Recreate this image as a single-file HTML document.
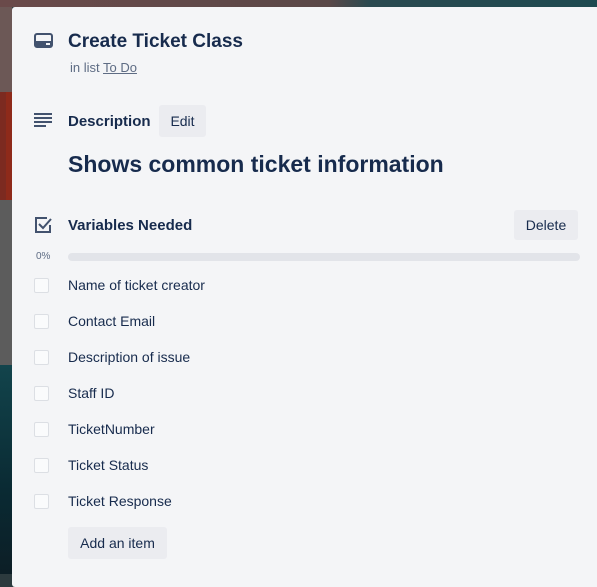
<!DOCTYPE html>
<html><head><style>
body{margin:0;width:597px;height:574px;overflow:hidden;position:relative;background:#2c3a3e;font-family:"Liberation Sans",sans-serif;color:#172b4d}
.bg{position:absolute}
.m{position:absolute;left:12px;top:7px;width:600px;height:580px;background:#f4f5f7;border-radius:3px}
.a{position:absolute}
.cb{position:absolute;left:34px;top:0;width:13px;height:13px;border:1px solid #dcdfe4;background:#fafbfc;border-radius:2px}
.it{position:absolute;left:68px;font-size:14px;color:#172b4d}
.btn{position:absolute;background:#ebecf0;border-radius:3px;font-size:14px;color:#172b4d;text-align:center}
</style></head><body>
<div class="bg" style="left:0;top:0;width:597px;height:7px;background:linear-gradient(90deg,#6a4a4a 0%,#5a4848 55%,#2a4a50 62%,#1e4a50 100%)"></div>
<div class="bg" style="left:0;top:7px;width:12px;height:85px;background:#6c5856"></div>
<div class="bg" style="left:0;top:92px;width:12px;height:108px;background:#7c2a20"></div>
<div class="bg" style="left:6px;top:92px;width:6px;height:108px;background:#8e2a1a"></div>
<div class="bg" style="left:0;top:200px;width:12px;height:165px;background:#5c5c5c"></div>
<div class="bg" style="left:0;top:365px;width:12px;height:209px;background:linear-gradient(#12444c,#0a2a33 60%,#0c1e26)"></div>
<div class="m"></div>
<svg class="a" style="left:34px;top:33px" width="19" height="16" viewBox="0 0 19 16"><rect x="1" y="1" width="17" height="13" rx="2" fill="none" stroke="#42526e" stroke-width="2"/><rect x="1" y="8" width="17" height="6" fill="#42526e"/><rect x="12" y="10" width="4" height="2" fill="#f4f5f7"/></svg>
<div class="a" style="left:68px;top:31px;font-size:19px;font-weight:bold">Create Ticket Class</div>
<div class="a" style="left:70px;top:60px;font-size:13px;color:#5e6c84">in list <span style="text-decoration:underline">To Do</span></div>
<svg class="a" style="left:34px;top:113px" width="18" height="14" viewBox="0 0 18 14"><rect x="0" y="0" width="18" height="2" fill="#42526e"/><rect x="0" y="4" width="18" height="2" fill="#42526e"/><rect x="0" y="8" width="18" height="2" fill="#42526e"/><rect x="0" y="12" width="12" height="2" fill="#42526e"/></svg>
<div class="a" style="left:68px;top:113px;font-size:15px;font-weight:bold">Description</div>
<div class="btn" style="left:159px;top:105px;width:47px;height:32px;line-height:32px">Edit</div>
<div class="a" style="left:68px;top:151px;font-size:23px;font-weight:bold">Shows common ticket information</div>
<svg class="a" style="left:34px;top:216px" width="18" height="18" viewBox="0 0 18 18"><path d="M13 2H2v14h14V9" fill="none" stroke="#42526e" stroke-width="2"/><path d="M5 8l4 4 8-9" fill="none" stroke="#42526e" stroke-width="2"/></svg>
<div class="a" style="left:68px;top:217px;font-size:15px;font-weight:bold">Variables Needed</div>
<div class="btn" style="left:514px;top:210px;width:64px;height:30px;line-height:30px">Delete</div>
<div class="a" style="left:36px;top:251px;font-size:10px;color:#5e6c84">0%</div>
<div class="a" style="left:68px;top:253px;width:512px;height:8px;background:#e2e4e9;border-radius:4px"></div>
<div class="cb" style="top:278px"></div><div class="it" style="top:277px">Name of ticket creator</div>
<div class="cb" style="top:314px"></div><div class="it" style="top:313px">Contact Email</div>
<div class="cb" style="top:350px"></div><div class="it" style="top:349px">Description of issue</div>
<div class="cb" style="top:386px"></div><div class="it" style="top:385px">Staff ID</div>
<div class="cb" style="top:422px"></div><div class="it" style="top:421px">TicketNumber</div>
<div class="cb" style="top:458px"></div><div class="it" style="top:457px">Ticket Status</div>
<div class="cb" style="top:494px"></div><div class="it" style="top:493px">Ticket Response</div>
<div class="btn" style="left:68px;top:527px;width:99px;height:32px;line-height:32px">Add an item</div>
</body></html>
